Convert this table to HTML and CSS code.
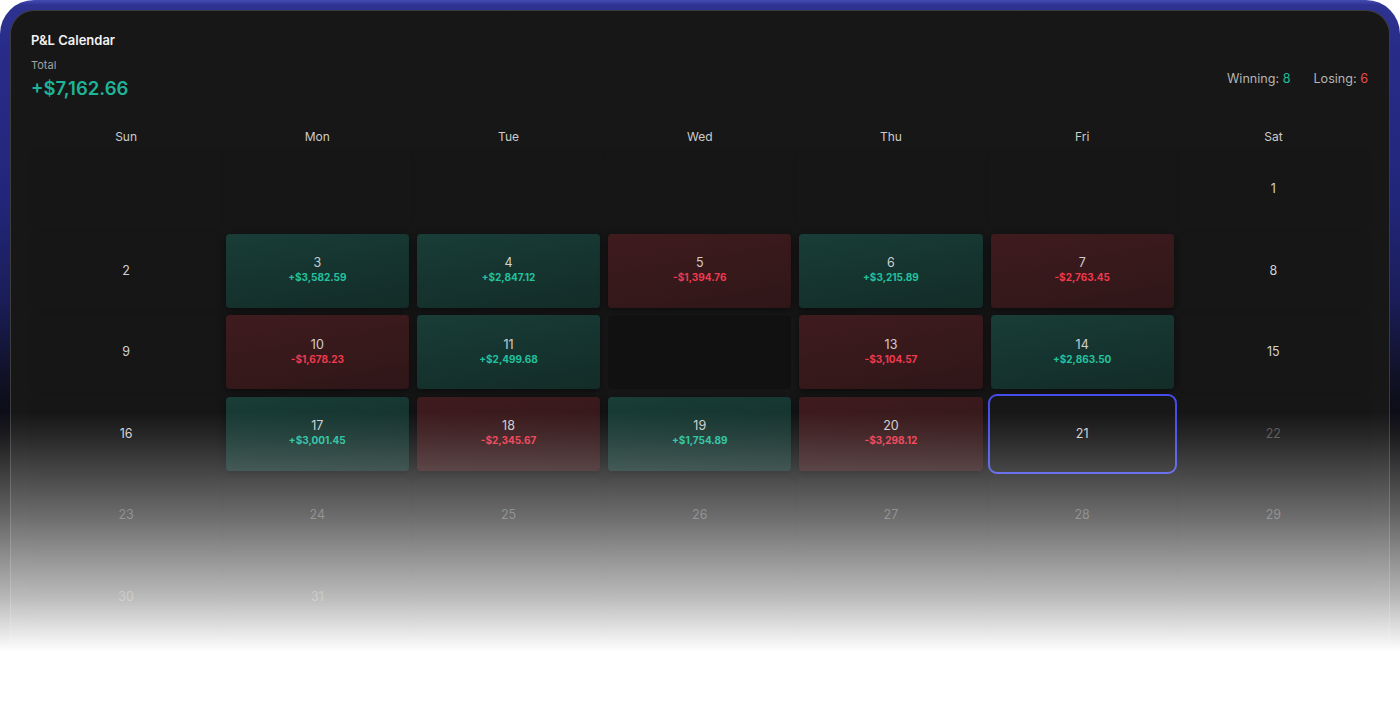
FILE: index.html
```html
<!DOCTYPE html>
<html lang="en">
<head>
<meta charset="utf-8">
<title>P&amp;L Calendar</title>
<link rel="stylesheet" href="styles.css">
</head>
<body>
<div class="stage">
  <div class="frame">
    <div class="card">
      <header class="head">
        <div class="head-left">
          <h1 class="title">P&amp;L Calendar</h1>
          <div class="total-label">Total</div>
          <div class="total-value">+$7,162.66</div>
        </div>
        <div class="stats">
          <span class="stat">Winning: <b class="win">8</b></span>
          <span class="stat">Losing: <b class="loss">6</b></span>
        </div>
      </header>

      <div class="weekdays">
        <div>Sun</div><div>Mon</div><div>Tue</div><div>Wed</div><div>Thu</div><div>Fri</div><div>Sat</div>
      </div>

      <div class="grid">
        <div class="cell blank"></div>
        <div class="cell blank"></div>
        <div class="cell blank"></div>
        <div class="cell blank"></div>
        <div class="cell blank"></div>
        <div class="cell blank"></div>
        <div class="cell plain"><span class="num">1</span></div>

        <div class="cell plain"><span class="num">2</span></div>
        <div class="cell up"><span class="num">3</span><span class="amt">+$3,582.59</span></div>
        <div class="cell up"><span class="num">4</span><span class="amt">+$2,847.12</span></div>
        <div class="cell down"><span class="num">5</span><span class="amt">-$1,394.76</span></div>
        <div class="cell up"><span class="num">6</span><span class="amt">+$3,215.89</span></div>
        <div class="cell down"><span class="num">7</span><span class="amt">-$2,763.45</span></div>
        <div class="cell plain"><span class="num">8</span></div>

        <div class="cell plain"><span class="num">9</span></div>
        <div class="cell down"><span class="num">10</span><span class="amt">-$1,678.23</span></div>
        <div class="cell up"><span class="num">11</span><span class="amt">+$2,499.68</span></div>
        <div class="cell closed"></div>
        <div class="cell down"><span class="num">13</span><span class="amt">-$3,104.57</span></div>
        <div class="cell up"><span class="num">14</span><span class="amt">+$2,863.50</span></div>
        <div class="cell plain"><span class="num">15</span></div>

        <div class="cell plain"><span class="num">16</span></div>
        <div class="cell up"><span class="num">17</span><span class="amt">+$3,001.45</span></div>
        <div class="cell down"><span class="num">18</span><span class="amt">-$2,345.67</span></div>
        <div class="cell up"><span class="num">19</span><span class="amt">+$1,754.89</span></div>
        <div class="cell down"><span class="num">20</span><span class="amt">-$3,298.12</span></div>
        <div class="cell today"><span class="num">21</span></div>
        <div class="cell future"><span class="num">22</span></div>

        <div class="cell future"><span class="num">23</span></div>
        <div class="cell future"><span class="num">24</span></div>
        <div class="cell future"><span class="num">25</span></div>
        <div class="cell future"><span class="num">26</span></div>
        <div class="cell future"><span class="num">27</span></div>
        <div class="cell future"><span class="num">28</span></div>
        <div class="cell future"><span class="num">29</span></div>

        <div class="cell future"><span class="num">30</span></div>
        <div class="cell future"><span class="num">31</span></div>
        <div class="cell blank"></div>
        <div class="cell blank"></div>
        <div class="cell blank"></div>
        <div class="cell blank"></div>
        <div class="cell blank"></div>
      </div>
    </div>
  </div>
  <div class="fade"></div>
</div>
</body>
</html>
```

FILE: styles.css
```css
* { box-sizing: border-box; }

html, body {
  margin: 0;
  padding: 0;
  background: #ffffff;
}

body {
  width: 1400px;
  height: 724px;
  overflow: hidden;
  font-family: Inter, "Noto Sans", "Liberation Sans", sans-serif;
}

.stage {
  position: relative;
  width: 1400px;
  height: 724px;
  overflow: hidden;
}

.frame {
  width: 1400px;
  height: 800px;
  padding: 10px;
  border-radius: 34px;
  background: linear-gradient(180deg, #444bb4 0px, #2e3392 5px, #282c88 50px, #22267a 200px, #1a1d58 300px, #101124 380px, #0a0a0c 440px, #0a0a0a 100%);
}

.card {
  height: 100%;
  border-radius: 24px;
  background: #171717;
  border: 1px solid rgba(255, 255, 255, 0.16);
  padding: 21px 21px 0 20px;
}

.head {
  display: flex;
  justify-content: space-between;
  align-items: flex-end;
}

.title {
  margin: 0;
  font-size: 13px;
  line-height: 16px;
  font-weight: 600;
  color: #f2f2f2;
}

.total-label {
  margin-top: 9px;
  font-size: 11px;
  line-height: 16px;
  color: #a3a3a3;
}

.total-value {
  margin-top: 3px;
  font-size: 18.5px;
  line-height: 24px;
  font-weight: 600;
  color: #1db597;
}

.stats {
  display: flex;
  gap: 23px;
  margin-bottom: 13px;
  font-size: 12.6px;
  line-height: 16px;
  color: #b5b5b5;
}

.stat b { font-weight: 400; }
.win { color: #1fbf9c; }
.loss { color: #ee4b4b; }

.weekdays {
  display: grid;
  grid-template-columns: repeat(7, 1fr);
  column-gap: 8px;
  margin: 29px 3px 0 3.5px;
  font-size: 12px;
  line-height: 16px;
  color: #cdcdcd;
  text-align: center;
}

.grid {
  display: grid;
  grid-template-columns: repeat(7, 1fr);
  grid-auto-rows: 74px;
  column-gap: 8px;
  row-gap: 7.5px;
  margin: 7px 3px 0 3.5px;
}

.cell {
  display: flex;
  flex-direction: column;
  align-items: center;
  justify-content: center;
  border-radius: 4px;
  background: #161616;
  box-shadow: inset 0 0 0 1px rgba(255, 255, 255, 0.008), 0 0 6px rgba(0, 0, 0, 0.12);
}

.num {
  font-size: 12.5px;
  line-height: 16px;
  color: #d2d2d2;
}

.amt {
  font-size: 10px;
  line-height: 13px;
  font-weight: 700;
}

.up .num, .down .num {
  margin-top: -2px;
}

.up {
  background: linear-gradient(170deg, #193d37 0%, #16342f 50%, #132c28 100%);
  box-shadow: 0 2px 8px rgba(0, 0, 0, 0.55);
}
.up .amt { color: #22c29e; }

.down {
  background: linear-gradient(170deg, #3f1b1e 0%, #37191b 50%, #2f1618 100%);
  box-shadow: 0 2px 8px rgba(0, 0, 0, 0.55);
}
.down .amt { color: #ef3a4f; }

.up .num, .down .num { color: #cfcfcf; }

.closed {
  background: #111111;
  box-shadow: none;
}

.blank {
  background: #161616;
}

.today {
  background: #171717;
  outline: 2px solid #464de9;
  outline-offset: 1px;
  border-radius: 6px;
  box-shadow: none;
}

.future .num { color: #555555; }

.fade {
  position: absolute;
  left: 0;
  top: 0;
  width: 1400px;
  height: 724px;
  pointer-events: none;
  background: linear-gradient(180deg,
    rgba(255, 255, 255, 0) 0px,
    rgba(255, 255, 255, 0) 412px,
    rgba(255, 255, 255, 0.07) 435px,
    rgba(255, 255, 255, 0.36) 514px,
    rgba(255, 255, 255, 0.7) 596px,
    #ffffff 652px,
    #ffffff 724px);
}
```
